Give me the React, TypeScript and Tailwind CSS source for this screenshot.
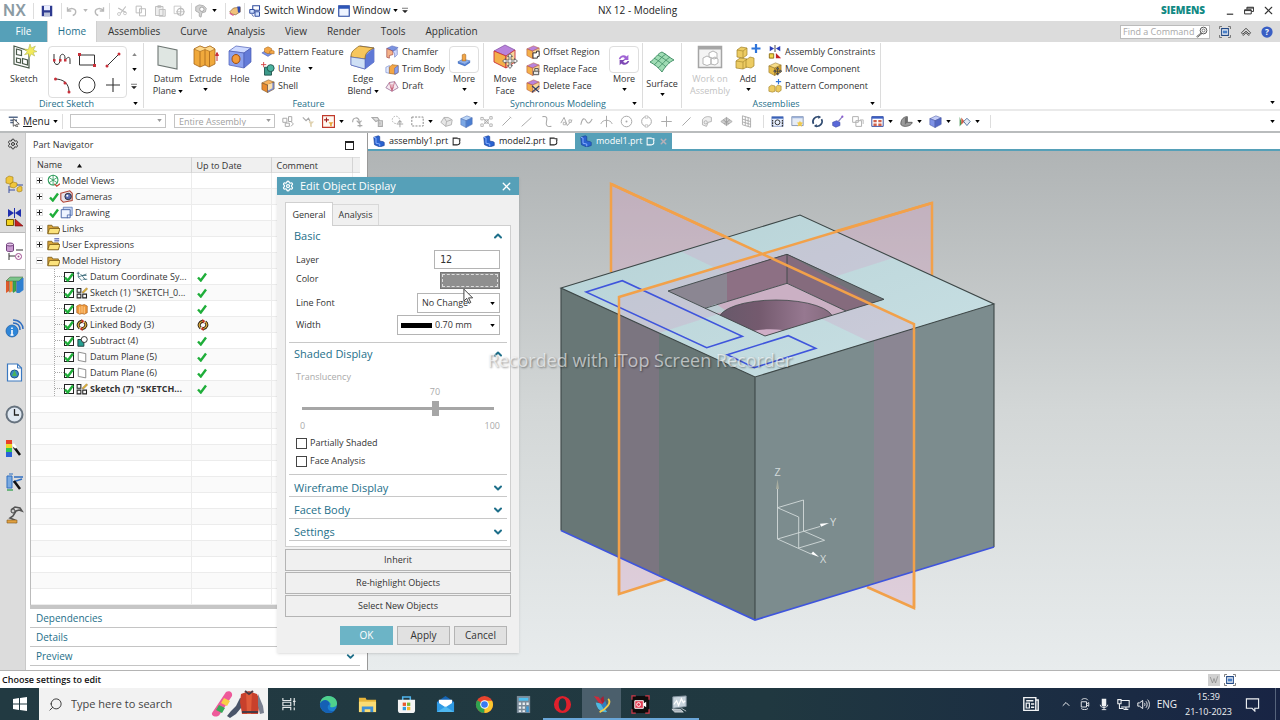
import { useState } from "react";
import type { ReactNode } from "react";
import { Settings, X, ChevronUp, ChevronDown, Search } from "lucide-react";

/* ---------- icon helpers ---------- */

function Ico({ box = 16, className = "w-3.5 h-3.5", children }: { box?: number; className?: string; children: ReactNode }) {
  return (
    <svg viewBox={`0 0 ${box} ${box}`} className={className + " shrink-0"} fill="none" aria-hidden="true">
      {children}
    </svg>
  );
}

function Cube({ top, left, right, stroke = "#555" }: { top: string; left: string; right: string; stroke?: string }) {
  return (
    <g stroke={stroke} strokeWidth=".6" strokeLinejoin="round">
      <path d="M1 4.5 8.5 1 15 3.5 7.5 7z" fill={top} />
      <path d="M1 4.5 7.5 7V15.5L1 12z" fill={left} />
      <path d="M15 3.5 7.5 7V15.5L15 11.5z" fill={right} />
    </g>
  );
}

const Caret = ({ className = "text-black" }: { className?: string }) => (
  <svg viewBox="0 0 6 4" className={"w-[5px] h-[3px] shrink-0 " + className} fill="currentColor" aria-hidden="true">
    <path d="M0 0h6L3 4z" />
  </svg>
);

const Tick = ({ className = "w-2.5 h-2.5" }: { className?: string }) => (
  <Ico box={10} className={className}>
    <path d="M1 5.5 3.8 8.5 9 1.5" stroke="#1fae3a" strokeWidth="2.4" />
  </Ico>
);

/* ---------- ribbon icons ---------- */

const sketchIcon = (
  <Ico box={26} className="w-[26px] h-[26px]">
    <path d="M3 2v18l15 4V7z" fill="#fff" stroke="#4a5a4a" strokeWidth="1.2" />
    <path d="M5.500 5l5 1.500v5l-5-1zM5.500 14l4 1v4l-4-1zM11.500 14.500l5 1.500v5l-5-1.500z" stroke="#4a5a4a" strokeWidth="1.200" />
    <path d="M19 0l1.400 4 4-2-2 4 3.600 1.500-3.800 1 1.500 3.500-3.500-2-1.700 3.500-1-3.800-4 1 2.800-3-3-2.700 4 .5z" fill="#f3ea5a" stroke="#a8b04a" strokeWidth=".5" />
  </Ico>
);

const datumIcon = (
  <Ico box={26} className="w-[26px] h-[26px]">
    <path d="M3 2l19 4v19L3 21z" fill="#dfe6e2" stroke="#6d7673" strokeWidth="1.100" />
  </Ico>
);

const extrudeIcon = (
  <Ico box={26} className="w-[26px] h-[26px]">
    <path d="M1 5l6-3 5 2 5-2 5 3v15l-6 3-4-2-5 2-6-3z" fill="#f0a93c" stroke="#a5651a" strokeWidth=".8" />
    <path d="M1 5l6 2.500 5-2 5 2L22 5l-5-3-5 2-5-2z" fill="#ffd98a" stroke="#a5651a" strokeWidth=".6" />
    <path d="M7 7.500V23M12 5.500V21M16.500 7.500V23" stroke="#a5651a" strokeWidth=".8" />
    <path d="M24 17v-7M22.500 11.500L24 8.500l1.500 3z" stroke="#c8303a" fill="#c8303a" />
  </Ico>
);

const holeIcon = (
  <Ico box={26} className="w-[26px] h-[26px]">
    <path d="M2 7l7-5 15 2-7 5z" fill="#cdd9ff" stroke="#4a5cb4" strokeWidth=".7" />
    <path d="M2 7l15 2v15L2 21z" fill="#8ba1ee" stroke="#4a5cb4" strokeWidth=".7" />
    <path d="M24 4l-7 5v15l7-6z" fill="#637bd8" stroke="#4a5cb4" strokeWidth=".7" />
    <ellipse cx="9" cy="15" rx="4" ry="4.500" fill="#f39b3a" stroke="#9b4e16" />
  </Ico>
);

const edgeBlendIcon = (
  <Ico box={26} className="w-[26px] h-[26px]">
    <path d="M1 12L10 2l14 2v14l-9 7-14-4z" fill="#8ba1ee" stroke="#4a5cb4" strokeWidth=".7" />
    <path d="M24 4l-9 8v13l9-7z" fill="#6079d6" />
    <path d="M1 13c0-6 3-7 8-11l15 2c-6 3-9 5-9 11z" fill="#f7c65c" stroke="#8f6a22" strokeWidth=".8" />
    <path d="M1 13l14 2v10L1 21z" fill="#cfe0f5" stroke="#4a5cb4" strokeWidth=".6" />
  </Ico>
);

const moveFaceIcon = (
  <Ico box={26} className="w-[26px] h-[26px]">
    <path d="M2 7l11-6 10 5-9 6z" fill="#b983dc" stroke="#7c4aa0" strokeWidth=".7" />
    <path d="M2 7l12 5v12L2 18z" fill="#f4b04a" stroke="#c8303a" strokeWidth=".9" />
    <path d="M23 6l-9 6v12l9-6z" fill="#f7d79a" stroke="#c8303a" strokeWidth=".9" />
    <path d="M18 9.500l2.500 3H19v3.500h3.500v-1.500l3 2.500-3 2.500V18H19v3.500h1.500L18 24.500l-2.500-3H17V18h-3.500v1.500l-3-2.500 3-2.500V16H17v-3.500h-1.500z" fill="#eee" stroke="#555" strokeWidth=".8" />
  </Ico>
);

const surfaceIcon = (
  <Ico box={26} className="w-[26px] h-[26px]">
    <path d="M1 13C6 10 9 4 13 3c4 2 8 6 12 8-5 2-9 7-12 12-3-4-8-8-12-10z" fill="#9fdcb4" stroke="#3d8a62" strokeWidth=".9" />
    <path d="M5 9c5 3 9 6 12 9M9 6c5 3 9 6 12 8M5 16c4-3 8-9 12-11M9 19c4-3 7-8 12-11" stroke="#3d8a62" strokeWidth=".8" />
  </Ico>
);

const workOnIcon = (
  <Ico box={26} className="w-[26px] h-[26px]">
    <path d="M1.500 2.500h23v21h-23z" fill="#f4f4f4" stroke="#a5a5a5" strokeWidth="1.500" />
    <path d="M1 2h24v3.500H1z" fill="#a5a5a5" />
    <path d="M6 14l4-2 4 2v6l-4 1.500L6 20zM12 9l4-2 4 2v5l-3 1-3-1.500-2-.5zM14 15l4-2 3 2v4l-3 2-4-1z" fill="#fff" stroke="#b5b5b5" />
  </Ico>
);

const addIcon = (
  <Ico box={26} className="w-[26px] h-[26px]">
    <g stroke="#a08128" strokeWidth=".7" fill="#eccb62">
      <path d="M2 6l4-3 6 1v7l-4 3-6-1z" />
      <path d="M1 17l4-3 7 1v8l-4 2-7-1z" />
      <path d="M11 16l4-3 4 1v8l-3 2-5-1z" />
    </g>
    <path d="M2 6l6 1v7M8 7l4-3M1 17l7 1v7M8 18l4-3" stroke="#a08128" strokeWidth=".6" />
    <path d="M21 0v9M16.500 4.500h9" stroke="#2d74da" strokeWidth="2.200" />
  </Ico>
);

const patternIcon = (
  <Ico>
    <path d="M1 9l5-3 8 3-6 4z" fill="#7b93e0" stroke="#4a5cb4" strokeWidth=".6" />
    <path d="M4 8V4l4-2 4 2v4l-4 2z" fill="#f3a646" stroke="#a5651a" strokeWidth=".6" />
    <path d="M10 10V7l3-1 2 1v3z" fill="#f3a646" stroke="#a5651a" strokeWidth=".6" />
  </Ico>
);

const uniteIcon = (
  <Ico>
    <path d="M4 6h8v9H4z" fill="#3c9a8a" stroke="#1e4f48" />
    <circle cx="11" cy="7" r="4" fill="#4bb3a0" stroke="#1e4f48" />
    <path d="M3 0v6M0 3h6" stroke="#d23b3b" />
  </Ico>
);

const shellIcon = (
  <Ico>
    <Cube top="#f7b25c" left="#e98b2e" right="#7b8fd8" stroke="#704a1c" />
    <path d="M8 6l5-1.500v6L8 13z" fill="#fbe0b0" />
  </Ico>
);

const chamferIcon = (
  <Ico>
    <path d="M2 4l6-3 7 2-6 4z" fill="#7b93e0" stroke="#4a5cb4" strokeWidth=".6" />
    <path d="M2 4l7 3v4l-4 1v3l-3-1z" fill="#f4b28a" stroke="#9b3b3b" strokeWidth=".7" />
    <path d="M9 7l5-2v6l-3 3v-4z" fill="#cfd9ff" stroke="#4a5cb4" strokeWidth=".6" />
  </Ico>
);

const trimIcon = (
  <Ico>
    <path d="M1 6l4-2v9l-4-1z" fill="#dfe8ff" stroke="#7083c8" strokeWidth=".7" />
    <path d="M5 6l3-3 7 1v8l-3 2-7-1z" fill="#f3a646" stroke="#a5651a" strokeWidth=".7" />
    <path d="M11 7l4-3v8l-4 2z" fill="#8ba1ee" stroke="#4a5cb4" strokeWidth=".6" />
  </Ico>
);

const draftIcon = (
  <Ico>
    <path d="M1 10l4-6 6-1 4 7-7 4z" fill="#f5e8f0" stroke="#8a5a88" strokeWidth=".8" />
    <path d="M5 4l3 10M11 3l-3 11M8 6v5M6.500 9.500L8 12l1.500-2.500" stroke="#c0506a" strokeWidth=".8" />
  </Ico>
);

const featureMoreIcon = (
  <Ico>
    <path d="M1 10l6-3 8 2-6 4z" fill="#8fb2ee" stroke="#3a5fa8" strokeWidth=".6" />
    <path d="M1 10l8 3v2l-8-3zM9 13l6-4v2l-6 4z" fill="#4a78cc" />
    <path d="M6 2l3-1 1 1v7H6z" fill="#f3a646" stroke="#a5651a" strokeWidth=".7" />
  </Ico>
);

const syncMoreIcon = (
  <Ico>
    <path d="M2 7c1-4 6-6 9-3l2-2v6H7l2-2c-2-2-4-1-5 1z" fill="#a064d4" />
    <path d="M14 9c-1 4-6 6-9 3l-2 2V8h6l-2 2c2 2 4 1 5-1z" fill="#7d48b4" />
  </Ico>
);

const faceBase = <Cube top="#b983dc" left="#f4b04a" right="#f7d79a" stroke="#b0503a" />;
const offsetIcon = (
  <Ico>
    {faceBase}
    <path d="M8 9h4v-2h3v6h-2v2H8z" fill="#fff" stroke="#222" />
  </Ico>
);
const replaceIcon = (
  <Ico>
    {faceBase}
    <path d="M8.500 10.500h6v4h-6zM10 10V7.500h4V10" fill="#e8e8e8" stroke="#444" />
  </Ico>
);
const deleteIcon = (
  <Ico>
    {faceBase}
    <path d="M7 8l8 7M15 8l-8 7" stroke="#2b3c68" strokeWidth="1.400" />
  </Ico>
);

const constraintsIcon = (
  <Ico>
    <path d="M2 1l5 3-5 3zM14 1L9 4l5 3z" fill="#2b3fb8" />
    <path d="M8 0v8" stroke="#333" />
    <path d="M1.500 10h5v5h-5z" fill="#f2d84a" stroke="#8a6a10" />
    <path d="M9 9l6 6H9z" fill="#c42424" />
  </Ico>
);
const moveCompIcon = (
  <Ico>
    <Cube top="#f5dc8a" left="#e6bd4c" right="#d2a334" stroke="#8f7022" />
    <path d="M11 6v9M6.500 10.500h9M11 6l-1.500 2h3zM11 15l-1.500-2h3zM6.500 10.500l2-1.500v3zM15.500 10.500l-2-1.500v3z" stroke="#333" fill="#fff" strokeWidth=".8" />
  </Ico>
);
const patternCompIcon = (
  <Ico>
    <path d="M1 9l3-2 4 1v6l-3 1-4-1zM9 9l2-2 4 1v5l-3 2-3-1z" fill="#eccb62" stroke="#a08128" strokeWidth=".7" />
    <path d="M12 0v6M9 3h6" stroke="#2d74da" strokeWidth="1.300" />
  </Ico>
);

/* ---------- ribbon building blocks ---------- */

function BigButton({ icon, lines, caret, width, disabled, low }: { icon: ReactNode; lines: string[]; caret?: boolean; width: string; disabled?: boolean; low?: boolean }) {
  const last = lines.length - 1;
  return (
    <button disabled={disabled} className={`flex flex-col items-center ${width} ${low ? "pt-[6px]" : "pt-px"} ${disabled ? "text-[#c2c2c2]" : "text-[#333]"}`}>
      {icon}
      <span className="mt-[3px] block text-[9px] leading-[12px]">
        {lines.map((l, i) => (
          <span key={l} className="flex items-center justify-center gap-[2px] whitespace-nowrap">
            {l}
            {caret && i === last && last > 0 && <Caret />}
          </span>
        ))}
      </span>
      {caret && last === 0 && <span className="mt-[3px]"><Caret /></span>}
    </button>
  );
}

function SmallList({ items, width }: { items: [ReactNode, string, boolean?][]; width: string }) {
  return (
    <div className={`flex flex-col ${width}`}>
      {items.map(([icon, text, caret]) => (
        <button key={text} className="flex h-[17px] items-center gap-[3px] whitespace-nowrap text-[9px] text-[#333]">
          {icon}
          {text}
          {caret && <span className="ml-1"><Caret /></span>}
        </button>
      ))}
    </div>
  );
}

function MoreButton({ icon }: { icon: ReactNode }) {
  return (
    <button className="flex w-[30px] flex-col items-center pt-[3px] text-[9px] text-[#333]">
      <span className="flex h-[27px] w-full items-center justify-center rounded-sm border border-[#dedede]">{icon}</span>
      <span className="leading-[12px]">More</span>
      <span className="mt-[3px]"><Caret /></span>
    </button>
  );
}

function Group({ label, width, corner = true, children }: { label: string; width: string; corner?: boolean; children: ReactNode }) {
  return (
    <section className={`mt-px flex h-[65px] flex-col border-r border-[#dcdcdc] ${width}`}>
      <div className="flex min-h-0 flex-1">{children}</div>
      <div className="flex h-[10px] items-center pr-[5px]">
        <h2 className="flex-1 text-center text-[9px] leading-none text-[#1e6f8a]">{label}</h2>
        {corner && <Caret />}
      </div>
    </section>
  );
}

/* ---------- title bar + tabs ---------- */

function TitleBar() {
  return (
    <header className="flex h-[21px] items-center bg-white text-[10px] text-[#222]">
      <div className="flex flex-1 items-center">
        <span className="w-[33px] pl-[3px] font-['Roboto'] text-[17px] font-medium leading-none text-[#8b9ba4]">NX</span>
        <div className="flex items-center border-l border-[#ddd] pl-[7px]">
          <Ico className="w-3 h-3">
            <path d="M1 1h14v14H1z" fill="#2d3a90" />
            <path d="M4 1h8v6H4z" fill="#e8ecff" />
            <path d="M4 10h8v5H4z" fill="#b8c0d8" />
          </Ico>
          <div className="ml-2 flex h-4 items-center gap-[5px] border-x border-[#ddd] px-[4px] text-[#b8b8b8]">
            <Ico className="w-3 h-3"><path d="M2 3v5h5M2 8c3-5 11-4 11 1 0 2-1 4-4 5" stroke="currentColor" strokeWidth="1.800" /></Ico>
            <Caret className="text-[#b8b8b8]" />
            <Ico className="w-3 h-3"><path d="M14 3v5H9M14 8C11 3 3 4 3 9c0 2 1 4 4 5" stroke="currentColor" strokeWidth="1.800" /></Ico>
          </div>
          <div className="flex h-4 items-center gap-[7px] border-r border-[#ddd] px-[6px] text-[#bcbcbc]">
            <Ico className="w-3 h-3"><path d="M13 2L6 11M3 4l10 6" stroke="currentColor" strokeWidth="1.500" /><circle cx="4" cy="12" r="2" stroke="currentColor" /><circle cx="12" cy="11" r="2" stroke="currentColor" /></Ico>
            <Ico className="w-3 h-3"><path d="M1.500 1.500h7v9h-7zM6 5h8v9.500H6z" fill="#fff" stroke="currentColor" strokeWidth="1.300" /></Ico>
            <Ico className="w-3 h-3"><path d="M2 2h10v12H2zM5 1h4v2H5zM7 6h8v9H7z" fill="#eee" stroke="currentColor" strokeWidth="1.200" /></Ico>
            <Ico className="w-3 h-3"><path d="M1.500 1.500h9v10h-9z" stroke="currentColor" /><circle cx="10" cy="9" r="4.500" stroke="currentColor" strokeWidth="1.500" /><path d="M10 3v12M4 9h12" stroke="currentColor" /></Ico>
          </div>
          <div className="flex items-center gap-1 px-[2px]">
            <Ico className="w-3.5 h-3.5"><path d="M2 3l4-2 5 1 3 3-1 4-4 1-1 5-2-1v-4L2 8z" fill="#d4d4d4" stroke="#aaa" /><circle cx="9" cy="6" r="2.500" fill="#fff" stroke="#999" /></Ico>
            <Caret />
          </div>
          <div className="ml-[6px] flex h-4 items-center border-x border-[#ddd] px-[3px]">
            <Ico className="w-3 h-3"><path d="M1 9l5-5 9-1v6l-6 4-6-1z" fill="#f1c27c" stroke="#7a5020" strokeWidth=".8" /><path d="M11 2h4v8h-3z" fill="#2f4bb4" /><path d="M1 11l5 3" stroke="#e05090" strokeWidth="1.500" /></Ico>
          </div>
        </div>
        <button className="ml-[4px] flex items-center gap-[3px] whitespace-nowrap">
          <Ico className="w-3 h-3"><path d="M5 1h9v6H5z" fill="#fff" stroke="#2d4a9c" strokeWidth="1.400" /><path d="M1 6h6v5H1zM8 9h6v6H8z" fill="#cfe0ff" stroke="#2d4a9c" strokeWidth="1.300" /><path d="M4 12c0 2 1 3 3 3" stroke="#2d4a9c" /></Ico>
          Switch Window
        </button>
        <button className="ml-[3px] flex items-center gap-[3px]">
          <Ico className="w-3 h-3"><path d="M1 1h14v14H1z" fill="#eef4ff" stroke="#2445a0" strokeWidth="1.500" /><path d="M1 1h14v4H1z" fill="#2c55b8" /></Ico>
          Window
          <Caret />
        </button>
        <Ico box={8} className="ml-[4px] w-[6px] h-[7px]"><path d="M0 1h8M1 4h6L4 7z" fill="#222" stroke="#222" strokeWidth=".8" /></Ico>
      </div>
      <h1 className="text-[10px]">NX 12 - Modeling</h1>
      <div className="flex flex-1 items-center justify-end pr-[5px]">
        <span className="mr-[21px] text-[10px] font-extrabold text-[#128a84]">SIEMENS</span>
        <button aria-label="Minimize" className="mr-[10px]"><Ico box={10} className="w-2 h-2.5"><path d="M1 9h8" stroke="#333" strokeWidth="1.500" /></Ico></button>
        <button aria-label="Restore" className="mr-[8px]"><Ico box={12} className="w-2.5 h-2.5"><path d="M3.500 4V1.500h8v5H9M.7 4.500h8v5h-8zM.7 5.500h8M3.500 2.500h8" stroke="#333" strokeWidth="1.200" /></Ico></button>
        <button aria-label="Close"><X size={13} strokeWidth={2} className="text-[#333]" /></button>
      </div>
    </header>
  );
}

const ribbonTabs = ["Assemblies", "Curve", "Analysis", "View", "Render", "Tools", "Application"];

function RibbonTabs() {
  return (
    <nav className="flex h-[21px] items-stretch bg-[#dcdcdc] text-[10px] text-[#333]">
      <button className="w-[47px] bg-[#56a0b8] text-white">File</button>
      <button className="w-[50px] border-x border-[#d0d0d0] bg-white text-[#1e6f8a]">Home</button>
      <div className="flex gap-[20px] pl-[11px]">
        {ribbonTabs.map((t) => <button key={t}>{t}</button>)}
      </div>
      <div className="ml-auto flex items-center gap-[9px] pr-[7px]">
        <label className="flex h-[14px] w-[90px] items-center border border-[#bbb] bg-white pl-[2px] pr-px">
          <input aria-label="Find a Command" placeholder="Find a Command" className="min-w-0 flex-1 text-[9px] leading-none outline-none placeholder:text-[#a8a8a8]" />
          <Ico className="w-3 h-3"><circle cx="10" cy="6" r="4.500" stroke="#555" strokeWidth="1.300" /><circle cx="10" cy="6" r="2" stroke="#555" /><path d="M7 9l-6 5 1 1 6-5" stroke="#555" strokeWidth="1.200" /></Ico>
        </label>
        <Ico className="w-3 h-3"><path d="M4 .7H.7V4M12 .7h3.300V4M4 15.300H.7V12M12 15.300h3.300V12" stroke="#555" /><path d="M3.500 3.500h9v9h-9z" fill="#fff" stroke="#234a86" strokeWidth="1.400" /><path d="M5 6h6v4H5z" fill="#4a80c8" /></Ico>
        <Ico className="w-3 h-3"><path d="M2 9l6-6 6 6-1.500 2L8 7l-4.500 4zM4 13l4-4 4 4" stroke="#333" strokeWidth="1.200" /></Ico>
        <Ico className="w-3 h-3"><circle cx="8" cy="8" r="7.500" fill="#3a5fc4" /><text x="8" y="12" fontSize="11" fontWeight="700" textAnchor="middle" fill="#fff" fontFamily="Open Sans, sans-serif">?</text></Ico>
      </div>
    </nav>
  );
}

function Ribbon() {
  return (
    <div className="flex h-[67px] bg-white">
      <Group label="Direct Sketch" width="w-[144px]">
        <BigButton icon={sketchIcon} lines={["Sketch"]} width="w-[48px]" />
        <div className="mt-[3px] grid h-[52px] w-[79px] grid-cols-3 place-items-center rounded-sm border border-[#dedede]">
          <Ico box={18} className="w-[18px] h-[18px]"><path d="M1 3v6c0 6 6 6 6 0V7c0-5 5-5 5 0v2c0 0 5-6 5 0v4" stroke="#333" /><path d="M0 8h2.500v2.500H0zM6 8h2.500v2.500H6zM11 8h2.500v2.500H11z" fill="#c8303a" /></Ico>
          <Ico box={18} className="w-[18px] h-[18px]"><path d="M1.500 4h15v10h-15z" stroke="#333" /><path d="M0 2h3v3H0zM15 13h3v3h-3z" fill="#c8303a" /></Ico>
          <Ico box={18} className="w-[18px] h-[18px]"><path d="M3 15L15 3" stroke="#333" /><circle cx="3" cy="15" r="1.500" fill="#c8303a" /><circle cx="15" cy="3" r="1.500" fill="#c8303a" /></Ico>
          <Ico box={18} className="w-[18px] h-[18px]"><path d="M2 3c8 0 14 4 14 13" stroke="#333" /><circle cx="2.500" cy="3" r="1.500" fill="#c8303a" /><circle cx="12" cy="7" r="1.500" fill="#c8303a" /><circle cx="16" cy="16" r="1.500" fill="#c8303a" /></Ico>
          <Ico box={18} className="w-[18px] h-[18px]"><circle cx="9" cy="9" r="8" stroke="#333" /></Ico>
          <Ico box={18} className="w-[18px] h-[18px]"><path d="M9 2v14M2 9h14" stroke="#333" strokeWidth="1.100" /></Ico>
        </div>
        <div className="flex w-[14px] flex-col items-center justify-between pb-[8px] pt-[10px]">
          <span className="rotate-180"><Caret className="text-[#888]" /></span>
          <Caret />
          <Ico box={8} className="w-[6px] h-[7px]"><path d="M0 1h8M1 4h6L4 7z" fill="#222" stroke="#222" strokeWidth=".8" /></Ico>
        </div>
      </Group>

      <Group label="Feature" width="w-[340px]">
        <div className="flex pl-1">
          <BigButton icon={datumIcon} lines={["Datum", "Plane"]} caret width="w-[40px]" />
          <BigButton icon={extrudeIcon} lines={["Extrude"]} caret width="w-[35px]" />
          <BigButton icon={holeIcon} lines={["Hole"]} width="w-[34px]" />
          <SmallList width="w-[88px] pl-1" items={[[patternIcon, "Pattern Feature"], [uniteIcon, "Unite", true], [shellIcon, "Shell"]]} />
          <BigButton icon={edgeBlendIcon} lines={["Edge", "Blend"]} caret width="w-[36px]" />
          <SmallList width="w-[68px] pl-1" items={[[chamferIcon, "Chamfer"], [trimIcon, "Trim Body"], [draftIcon, "Draft"]]} />
          <MoreButton icon={featureMoreIcon} />
        </div>
      </Group>

      <Group label="Synchronous Modeling" width="w-[159px]">
        <BigButton icon={moveFaceIcon} lines={["Move", "Face"]} width="w-[42px]" />
        <SmallList width="w-[83px]" items={[[offsetIcon, "Offset Region"], [replaceIcon, "Replace Face"], [deleteIcon, "Delete Face"]]} />
        <MoreButton icon={syncMoreIcon} />
      </Group>

      <Group label="" corner={false} width="w-[39px]">
        <BigButton icon={surfaceIcon} lines={["Surface"]} caret width="w-[38px]" low />
      </Group>

      <Group label="Assemblies" width="w-[199px]">
        <BigButton icon={workOnIcon} lines={["Work on", "Assembly"]} width="w-[56px]" disabled />
        <BigButton icon={addIcon} lines={["Add"]} caret width="w-[20px]" />
        <SmallList width="w-[118px] pl-[10px]" items={[[constraintsIcon, "Assembly Constraints"], [moveCompIcon, "Move Component"], [patternCompIcon, "Pattern Component"]]} />
      </Group>

      <div className="ml-auto flex items-end pb-[5px] pr-[5px]"><Caret /></div>
    </div>
  );
}

/* ---------- selection toolbar ---------- */

const g = "#a9a9a9";
// one drawing per tool; "caret" puts a drop-down arrow after the tool
const selectionTools: { d: ReactNode; caret?: boolean }[] = [
  { d: <><path d="M1 4h5v5H1zM8 2h4v6H8zM4 10h5v4H4zM11 8l3 3-3 3" stroke={g} strokeWidth="1.200" /></> },
  { d: <><path d="M1 3l4 4 3-3 2 4" stroke={g} strokeWidth="1.400" /><path d="M8 8h7l-3 3v4l-2-1v-3z" fill="#e0d2b0" /></> },
  { caret: true, d: <><path d="M.7.7h14.600v14.600H.7z" fill="#fff8f0" stroke="#c0392b" strokeWidth="1.400" /><path d="M5.500 3v6M2.500 6h6" stroke="#a12020" strokeWidth="1.300" /><path d="M8 9h6l-2 2.500V14l-2-.5v-2z" fill="#e8a33a" /></> },
  { d: <><path d="M2 9c0-7 8-7 8-1v2M7 7l3 3 3-3M8 13h6M11 10v5" stroke={g} strokeWidth="1.400" /></> },
  { d: <><path d="M1 3h7l2 3-4 2zM9 7h5v7H9zM11 9v3" stroke={g} strokeWidth="1.300" fill="#ddd" /></> },
  { d: <><circle cx="6" cy="6" r="4.500" stroke={g} strokeDasharray="2 1.500" /><path d="M11 7v8M7 11h8M11 7l-2 2M11 7l2 2" stroke={g} strokeWidth="1.300" /></> },
  { caret: true, d: <><path d="M1 2.500h14v11H1z" stroke="#888" strokeDasharray="2.500 1.500" strokeWidth="1.200" /></> },
  { d: <><path d="M1 9l4-6h5l5 3-1 6-7 2z" fill="#e6e6e6" stroke={g} /><path d="M5 3l3 5-1 6M8 8l6-2" stroke={g} /></> },
  { d: <Cube top="#bcd6f7" left="#7ba7e4" right="#4c7ed0" stroke="#4a6cb0" /> },
  { d: <><path d="M5 5l6 6M11 5l-6 6" stroke={g} /><path d="M1 3h3v3H1zM12 2h3v3h-3zM1 11h3v3H1zM12 11h3v3h-3zM6 6h4v4H6z" stroke={g} /></> },
  { d: <path d="M3 13L13 3M12 2l2 2" stroke={g} strokeWidth="1.200" /> },
  { d: <path d="M2 14L14 3" stroke={g} strokeWidth="1.200" /> },
  { d: <path d="M3 2c6-1 6 2 5 6s0 7 6 6" stroke={g} strokeWidth="1.300" /> },
  { d: <><path d="M1 10l4-7 4 10 6-7" stroke={g} strokeWidth="1.200" /><path d="M4 9h3v3H4zM11 6h3v3h-3z" fill="#fff" stroke={g} /></> },
  { d: <path d="M1 12c2-10 5-8 7-4s5 1 7-3" stroke={g} strokeWidth="1.300" /> },
  { d: <path d="M8 1v14M1 11c2-6 12-6 14 0" stroke={g} strokeWidth="1.200" /> },
  { d: <><circle cx="8" cy="8" r="6.500" stroke={g} strokeWidth="1.200" /><circle cx="8" cy="8" r="1.200" fill={g} /></> },
  { d: <><circle cx="8" cy="8" r="6" stroke={g} strokeWidth="1.200" /><path d="M6.500 1h3v3h-3zM6.500 12h3v3h-3z" fill="#fff" stroke={g} strokeWidth=".7" /></> },
  { d: <path d="M8 1.500v13M1.500 8h13" stroke={g} strokeWidth="1.200" /> },
  { d: <path d="M3 13L13 3" stroke={g} strokeWidth="1.200" /> },
  { d: <><path d="M3 6c2-4 7-5 11-3v5l-4 1-2 5-5-2z" fill="#eee" stroke={g} /><circle cx="7" cy="9" r="2" stroke={g} /></> },
  { d: <><path d="M1 8l7-5 7 5-7 5z" fill="#ccc" stroke={g} /><path d="M4 6l7 5M8 3v10M12 6l-7 5" stroke="#999" /></> },
  { d: <path d="M3 1l10 3v11L3 12zM6.500 2v11M10 3v11M3 5l10 3M3 8.500l10 3" stroke={g} strokeWidth="1.100" /> },
];

const viewTools: { d: ReactNode; caret?: boolean }[] = [
  { d: <><path d="M1 2h14v12H1z" fill="#e8f0ff" stroke="#8a9cc8" /><path d="M1 2h14v2.500H1z" fill="#3a62b8" /><circle cx="8" cy="9" r="3" stroke="#333" strokeWidth="1.200" /><path d="M2 6v8M14 6v8" stroke="#333" strokeWidth="1.500" strokeDasharray="2 1" /></> },
  { d: <><path d="M1 2h14v11H1z" fill="#e6ecf6" stroke="#7888a8" /><path d="M1 2h14v2H1z" fill="#9ab0d8" /><path d="M11 7l1 2 3 .500-2 2 .500 3-2.500-1.500L8 14l1-3-2-1.500 3-.500z" fill="#f0c94a" /></> },
  { d: <><path d="M3 11a6 6 0 0 1 7-8.500M13 5a6 6 0 0 1-7 8.500" stroke="#2f4a70" strokeWidth="2" /><path d="M9 .5l3.500 2L9 5zM7 15.500l-3.500-2L7 11z" fill="#2f4a70" /></> },
  { d: <><path d="M2 9l5-2 4 2v4l-5 2-4-2z" fill="#5a68d8" stroke="#3a46a0" strokeWidth=".7" /><path d="M9 8l5-6" stroke="#8a80c0" strokeWidth="1.500" /><circle cx="14" cy="2" r="1.300" fill="#8a5ad0" /></> },
  { d: <><path d="M2 2h7v7H2zM6 7h7v7H6z" fill="#fff" stroke="#b0b0b0" strokeWidth="1.200" /><path d="M11 6h4v5" stroke="#b0b0b0" /></> },
  { caret: true, d: <><path d="M1 2h14v12H1z" fill="#fff" stroke="#3a4fa0" strokeWidth="1.200" /><path d="M1 2h14v2.500H1z" fill="#3a5fc4" /><path d="M3 6h4v3H3zM9 6h4v3H9zM3 10.500h4v3H3zM9 10.500h4v3H9z" fill="#d0604a" /></> },
  { caret: true, d: <><path d="M1 11c0-6 4-9 8-9v7h6c0 3-5 5-8 5s-6-1-6-3z" fill="#9a9a9a" stroke="#555" /><path d="M9 2L6 4v8l3-3" fill="#6d6d6d" /></> },
  { caret: true, d: <Cube top="#c4cdf7" left="#7f92e6" right="#5468c4" stroke="#3f4f9c" /> },
  { caret: true, d: <><path d="M2 2v12l3-4z" fill="#4a9a5a" /><path d="M4 3l4 5-4 4z" fill="#d0604a" /><path d="M7 8l4-4 4 4-4 5z" fill="#e4ecf8" stroke="#3a5f90" /></> },
];

function ToolRow({ tools }: { tools: { d: ReactNode; caret?: boolean }[] }) {
  return (
    <div className="flex items-center">
      {tools.map((t, i) => (
        <button key={i} aria-label={`Tool ${i + 1}`} className="flex items-center">
          <span className="flex w-5 justify-center"><Ico className="w-[13px] h-[13px]">{t.d}</Ico></span>
          {t.caret && <span className="flex w-[9px] justify-start"><Caret /></span>}
        </button>
      ))}
    </div>
  );
}

function DropBox({ width, value, label }: { width: string; value: string; label: string }) {
  return (
    <div className={`relative h-[14px] ${width}`}>
      <select disabled aria-label={label} className="h-full w-full appearance-none border border-[#c4c4c4] bg-white pl-1 text-[9px] leading-none text-[#a0a0a0] opacity-100">
        <option>{value}</option>
      </select>
      <span className="pointer-events-none absolute right-1 top-[5px] flex"><Caret className="text-[#999]" /></span>
    </div>
  );
}

function SelectionBar() {
  return (
    <div className="flex h-[24px] items-center border-y-2 border-t-[#eaeaea] border-b-[#b9bcbd] bg-white text-[9px] text-[#222]">
      <button className="ml-2 mr-[5px] flex items-center gap-[3px] border-r border-[#ddd] pr-1 text-[10px]">
        <Ico className="w-3 h-3"><path d="M1 2h12v2H1zM3 6h9v2H3zM3 9h7v2H3z" fill="#566a8a" /><path d="M7 5l8 7-4 .500 2 3-2 .500-1.500-3L7 15z" fill="#fff" stroke="#333" /></Ico>
        <span><u>M</u>enu</span>
        <Caret />
      </button>
      <div className="flex gap-2 pl-[2px]">
        <DropBox width="w-[96px]" value="" label="Type filter" />
        <DropBox width="w-[101px]" value="Entire Assembly" label="Selection scope" />
      </div>
      <div className="pl-1"><ToolRow tools={selectionTools} /></div>
      <div className="ml-[6px] border-x border-[#ddd] pl-1 pr-[6px]"><ToolRow tools={viewTools} /></div>
      <div className="ml-auto pr-[5px]"><Caret /></div>
    </div>
  );
}

/* ---------- resource bar ---------- */

const resourceIcons: { d: ReactNode; active?: boolean; cls: string }[] = [
  { cls: "h-[36px]", d: <><path d="M1 3l3-2 4 1v5L5 9 1 8zM5 9l3-2 4 1v3l-3 2-4-1zM12 13l3-2 2 1v4l-3 1-2-1z" fill="#f0c63c" stroke="#a07a14" strokeWidth=".6" /><path d="M4 11v7M4 15h6M12 10h6" stroke="#3a4fa0" /></> },
  { cls: "h-[30px]", d: <><path d="M3 1l6 4-6 4zM16 1l-6 4 6 4z" fill="#1f2fae" /><path d="M9.500 0v10" stroke="#1f2fae" /><path d="M1.500 11.500h7v6h-7z" fill="#f2d21e" stroke="#6d5a08" /><path d="M10 11l8 7h-8z" fill="#c42020" stroke="#701010" strokeWidth=".6" /></> },
  { cls: "h-[38px]", active: true, d: <><path d="M1.500 2.500v6c0 1.500 7 1.500 7 0v-6" fill="#c89ad0" stroke="#70407c" /><ellipse cx="5" cy="2.500" rx="3.500" ry="1.500" fill="#e6c8ea" stroke="#70407c" /><path d="M4 11v7M4 14h6M11 8h7" stroke="#333" /><circle cx="13.500" cy="14.500" r="3" stroke="#a04a90" /><circle cx="13.500" cy="14.500" r="1" fill="#a04a90" /></> },
  { cls: "h-[30px]", d: <><path d="M1 5l3-3v13l-3 2z" fill="#e05a2a" /><path d="M4.500 5l3-3v13l-3 2z" fill="#f4922a" /><path d="M8 5l3-3v13l-3 2z" fill="#35a84a" /><path d="M11.500 5l5-3h2v12l-4 3h-3z" fill="#2f7fd0" /><path d="M1 5L5 1h13l-4 4z" fill="#7cc48a" stroke="#3a6a40" strokeWidth=".5" /><path d="M4.300 5v11M7.800 5v11M11.300 5v11" stroke="#444" strokeWidth=".5" /></> },
  { cls: "h-[56px]", d: <><circle cx="7" cy="12" r="6" fill="#2f86d8" stroke="#1a5aa0" strokeWidth=".7" /><path d="M7 8.500v1.500M7 11v5M5.500 16h3" stroke="#fff" strokeWidth="1.600" /><path d="M8 4c5 0 7 3 7 7M8 1c7 0 10 5 10 9" stroke="#2f6ec0" strokeWidth="1.500" /></> },
  { cls: "h-[32px]", d: <><path d="M2.500 1h10l4 4v13h-14z" fill="#fff" stroke="#3a78c0" strokeWidth="1.200" /><path d="M12.500 1v4h4" stroke="#3a78c0" /><circle cx="9.500" cy="11" r="4" fill="#3a8ac8" stroke="#205a88" /><path d="M7 13l2.500-6 2.500 6z" fill="#4cb45a" /></> },
  { cls: "h-[52px]", d: <><circle cx="9.500" cy="9.500" r="8" fill="#dfe8f2" stroke="#66727e" strokeWidth="2" /><path d="M9.500 4v6H14" stroke="#222" strokeWidth="1.300" /></> },
  { cls: "h-[16px]", d: <><path d="M1 1h6v4H1z" fill="#e8402a" /><path d="M1 5h6v4H1z" fill="#f0d82a" /><path d="M1 9h6v4H1z" fill="#32c850" /><path d="M1 13h6v5H1z" fill="#2a60d8" /><path d="M9 8l6 8" stroke="#111" strokeWidth="2.500" /><path d="M8 5l3 4" stroke="#fff" strokeWidth="2.500" /></> },
  { cls: "h-[52px]", d: <><path d="M2 3h5v12H2zM4 1h4" stroke="#2f6ec0" fill="#7aaae0" /><path d="M9 4h9M8 9l9-3" stroke="#2f6ec0" strokeWidth="1.500" /><path d="M9 8l6 8" stroke="#111" strokeWidth="2.500" /><path d="M2 17h6" stroke="#48a860" strokeWidth="1.500" /></> },
  { cls: "h-[14px]", d: <><path d="M6 4l4-3 5 1 2 3-3-1-3 1-3 5-3 2 5 2 1 3" stroke="#555" strokeWidth="1.600" /><path d="M2 14h10v3H2z" fill="#e0a040" stroke="#805820" strokeWidth=".6" /><circle cx="8" cy="5" r="2" fill="#ccc" stroke="#444" /></> },
];

function ResourceBar() {
  return (
    <aside className="flex w-[26px] flex-col items-center border-r border-[#c9c9c9] bg-[#dcdcdc]">
      <button aria-label="Options" className="mt-1 mb-[15px] flex h-[14px] items-center"><Settings size={12} className="text-[#333]" strokeWidth={2} /></button>
      {resourceIcons.map((r, i) => (
        <button
          key={i}
          aria-label={`Resource ${i + 1}`}
          className={`flex items-center justify-center ${r.cls} ${r.active ? "w-full border-y border-[#bbb] bg-white" : ""}`}
        >
          <Ico box={19} className="ml-[3px] w-[19px] h-[19px]">{r.d}</Ico>
        </button>
      ))}
    </aside>
  );
}

/* ---------- part navigator ---------- */

type NodeRow = { label: string; icon: ReactNode; kind: "root" | "checked" | "child"; open?: boolean; bold?: boolean; status?: "ok" | "linked" };

const folder = <><path d="M1 4h5l1 2h7v8H1z" fill="#d9a43a" stroke="#7a5a14" /><path d="M3 8h13l-2 6.500H1z" fill="#fbe27c" stroke="#7a5a14" /></>;
const sketchSmall = <><path d="M1.500 2h5v5h-5zM1.500 9.500h5v5h-5zM9 9.500h5v5H9z" stroke="#222" strokeWidth="1.400" /><path d="M8 7l6-6 1.500 1.500L10 8z" fill="#e8b83a" stroke="#7a5a14" strokeWidth=".6" /></>;
const planeSmall = <path d="M3 1.500l10 2v11l-10-2z" fill="#fff" stroke="#777" strokeWidth="1.100" />;
const linked = (
  <>
    <path d="M5 12C1 9 3 4 8 3M11 4c4 3 2 8-3 9" stroke="#2a1c10" strokeWidth="4" />
    <path d="M5 12C1 9 3 4 8 3M11 4c4 3 2 8-3 9" stroke="#e0b040" strokeWidth="1.600" />
    <path d="M7 0l4 2.500L8 6zM9 16l-4-2.500L8 10z" fill="#c03020" />
  </>
);

const treeRows: NodeRow[] = [
  { label: "Model Views", kind: "root", icon: <><circle cx="7.500" cy="7.500" r="6" stroke="#2a9a58" strokeWidth="1.300" /><path d="M7.500 1v13M2 4l11 7M13 4L2 11" stroke="#2a9a58" /><path d="M9 12l3 3 4-3" stroke="#c04030" strokeWidth="1.300" /></> },
  { label: "Cameras", kind: "checked", icon: <><path d="M1 4l11-3 3 3v9l-11 2-3-3z" fill="#e8e0e8" stroke="#b04030" strokeWidth="1.300" /><circle cx="10" cy="8" r="4" fill="#5a6ab0" stroke="#222" /><circle cx="9" cy="7" r="1.300" fill="#fff" /></> },
  { label: "Drawing", kind: "checked", icon: <><path d="M4 1.500h11v10H4z" fill="#c8d8f4" stroke="#5a78b8" /><path d="M1.500 4.500h11v10h-11z" fill="#eef4ff" stroke="#4a68a8" strokeWidth="1.200" /><path d="M9 15v-4h4" stroke="#4a68a8" /></> },
  { label: "Links", kind: "root", icon: folder },
  { label: "User Expressions", kind: "root", icon: <>{folder}<path d="M9 1h6M9 3.500h6" stroke="#2f3fa0" strokeWidth="1.200" /></> },
  { label: "Model History", kind: "root", open: true, icon: folder },
  { label: "Datum Coordinate Sy...", kind: "child", status: "ok", icon: <><path d="M3 1v7l5 5M3 8l11-4M6 4l7 8M8 6h6M9 11h6M1 3h4" stroke="#3a6a78" strokeWidth="1.100" /></> },
  { label: 'Sketch (1) "SKETCH_0...', kind: "child", status: "ok", icon: sketchSmall },
  { label: "Extrude (2)", kind: "child", status: "ok", icon: <><path d="M1 4l4-2 3 1 3-1 4 2v9l-4 2-3-1-3 1-4-2z" fill="#f0983a" stroke="#9a5414" strokeWidth=".8" /><path d="M5 5v9M8 4v9M11 5v9" stroke="#fbd49a" strokeWidth="1.200" /></> },
  { label: "Linked Body (3)", kind: "child", status: "linked", icon: linked },
  { label: "Subtract (4)", kind: "child", status: "ok", icon: <><path d="M2.500 6h8v9h-8z" fill="#26a092" stroke="#1c3a38" strokeWidth="1.200" /><circle cx="11" cy="6" r="4" fill="#fff" stroke="#222" strokeWidth="1.200" /><path d="M0 2h5" stroke="#222" strokeWidth="1.200" /></> },
  { label: "Datum Plane (5)", kind: "child", status: "ok", icon: planeSmall },
  { label: "Datum Plane (6)", kind: "child", status: "ok", icon: planeSmall },
  { label: 'Sketch (7) "SKETCH...', kind: "child", status: "ok", bold: true, icon: sketchSmall },
];
const emptyRows = Array.from({ length: 13 }, (_, i) => i);

function TreeCell({ row }: { row: NodeRow }) {
  const [on, setOn] = useState(true);
  if (row.kind === "child") {
    return (
      <label className="ml-[23px] flex h-[15px] items-center border-l border-dotted border-[#aaa]">
        <span className="w-[9px] border-t border-dotted border-[#aaa]" />
        <span className="relative flex h-[10px] w-[10px]">
          <input type="checkbox" checked={on} onChange={() => setOn(!on)} className="h-[10px] w-[10px] appearance-none border border-[#222] bg-white" />
          {on && <span className="pointer-events-none absolute inset-0 flex"><Tick /></span>}
        </span>
        <Ico className="ml-[2px] mr-[2px] w-3 h-3">{row.icon}</Ico>
        <span className={row.bold ? "font-bold" : ""}>{row.label}</span>
      </label>
    );
  }
  return (
    <div className="flex h-[15px] items-center pl-[5px]">
      <button aria-label={row.open ? "Collapse" : "Expand"} className="mr-[4px] flex h-[7px] w-[7px] items-center justify-center border border-[#ddd] bg-white">
        <Ico box={5} className="w-[5px] h-[5px]"><path d={row.open ? "M0 2.500h5" : "M0 2.500h5M2.500 0v5"} stroke="#222" /></Ico>
      </button>
      {row.kind === "checked" && <span className="ml-[2px] mr-px"><Tick /></span>}
      <Ico className="mr-[2px] w-[13px] h-[13px]">{row.icon}</Ico>
      {row.label}
    </div>
  );
}

function PartNavigator() {
  return (
    <section className="flex w-[342px] flex-col border-r border-[#999] bg-white text-[9px] text-[#333]">
      <div className="flex h-[24px] items-center justify-between pl-[7px] pr-[13px]">
        <h2>Part Navigator</h2>
        <button aria-label="Undock" className="h-[9px] w-[9px] border border-t-2 border-[#222]" />
      </div>
      <div className="ml-[4px] mr-[7px] flex-1 overflow-hidden border-l border-[#bbb]">
        <table className="w-full table-fixed border-collapse">
          <colgroup>
            <col className="w-[160px]" />
            <col className="w-[80px]" />
            <col className="w-[81px]" />
            <col />
          </colgroup>
          <thead>
            <tr className="h-[15px] border-y border-[#dedede] bg-[#f0f0f0] text-left">
              <th className="border-r border-[#d4d4d4] p-0 pl-[6px] font-normal">
                <span className="flex h-[13px] items-center gap-[14px]">Name <Ico box={8} className="w-[7px] h-[5px]"><path d="M0 7h8L4 1z" fill="#111" /></Ico></span>
              </th>
              <th className="border-r border-[#d4d4d4] p-0 pl-[5px] font-normal leading-[13px]">Up to Date</th>
              <th className="border-r border-[#d4d4d4] p-0 pl-[5px] font-normal leading-[13px]">Comment</th>
              <th className="p-0" />
            </tr>
          </thead>
          <tbody>
            {treeRows.map((row) => (
              <tr key={row.label} className="h-4 even:bg-[#fafafa]">
                <td className="overflow-hidden whitespace-nowrap border-b border-r border-[#ececec] p-0"><TreeCell row={row} /></td>
                <td className="border-b border-r border-[#ececec] p-0 pl-[5px]">
                  {row.status === "ok" && <Tick />}
                  {row.status === "linked" && <Ico className="w-3 h-3">{linked}</Ico>}
                </td>
                <td className="border-b border-r border-[#ececec] p-0" />
                <td className="border-b border-[#ececec] p-0" />
              </tr>
            ))}
            {emptyRows.map((n) => (
              <tr key={n} className="h-4 even:bg-[#fafafa]">
                <td className="border-b border-r border-[#ececec] p-0" />
                <td className="border-b border-r border-[#ececec] p-0" />
                <td className="border-b border-r border-[#ececec] p-0" />
                <td className="border-b border-[#ececec] p-0" />
              </tr>
            ))}
          </tbody>
        </table>
      </div>
      <div className="ml-[4px] mr-[7px] mb-[4px] border-t-4 border-[#c6c6c6] text-[10px] text-[#1e6f8a]">
        {["Dependencies", "Details", "Preview"].map((s) => (
          <button key={s} className="flex h-[19px] w-full items-center justify-between border-b border-[#c4c4c4] pl-[6px] pr-[4px]">
            {s}
            <ChevronDown size={11} strokeWidth={4} />
          </button>
        ))}
      </div>
    </section>
  );
}

/* ---------- graphics window ---------- */

const partIcon = <><path d="M1 3l6-2 2 1v6l5 1 1 1v4l-6 2-7-3z" fill="#2a62d0" stroke="#163a90" strokeWidth=".8" /><path d="M1 3l3 1v7l5 1v3" stroke="#8fb4ff" strokeWidth="1.200" /></>;

function DocTab({ name, active }: { name: string; active?: boolean }) {
  return (
    <button className={`flex items-center gap-1 text-[9px] ${active ? "w-[97px] bg-[#56a0b8] pl-[5px] text-white" : "w-[104px] pl-0 text-[#222]"}`}>
      <Ico className="w-3 h-3">{partIcon}</Ico>
      {name}
      <Ico className="w-[9px] h-[9px]"><path d="M10 3h4v4M10 14H2V2h8M10 14c4-1 5-4 3-8" stroke="currentColor" strokeWidth="1.800" /></Ico>
      {active && <X size={9} strokeWidth={4} className="text-[#b8b0b8]" />}
    </button>
  );
}

const EDGE = "#3d4747";
const ORANGE = "#f2a14a";
const BLUE = "#3f55dc";

function ModelView() {
  return (
    <svg viewBox="368 151 912 519" preserveAspectRatio="xMidYMid slice" className="h-full w-full" role="img" aria-label="Model">
      <defs>
        <linearGradient id="topFace" x1="0" x2="1" y1="0" y2="1">
          <stop offset="0" stopColor="#b6d2d6" />
          <stop offset="1" stopColor="#c9e0e4" />
        </linearGradient>
        <linearGradient id="bore" x1="0" x2="1">
          <stop offset="0" stopColor="#67596a" />
          <stop offset=".35" stopColor="#745a6e" />
          <stop offset=".75" stopColor="#967890" />
          <stop offset="1" stopColor="#846a7d" />
        </linearGradient>
        <clipPath id="pocketFloor"><path d="M786.700 283.300L705 308.300 765 336 846 311z" /></clipPath>
      </defs>

      {/* plane parts behind the block */}
      <g fill="#d8a0c4" fillOpacity=".35">
        <path d="M611 184L727 237.500 611 273z" />
        <path d="M835 231L932 203V276z" />
        <path d="M619 557V594L666 579z" />
        <path d="M867 587L914 608V571z" />
      </g>
      <path d="M611 272V184L727 237.500M835 231.500L932 203V275M619 556V594L666 579M867 587L914 608V571" stroke={ORANGE} strokeWidth="2.500" fill="none" />

      {/* block */}
      <path d="M561 288L800 215 994 304 755 377z" fill="url(#topFace)" />
      <path d="M561 288L755 377V620L561 530.500z" fill="#687776" />
      <path d="M994 304L755 377V620L994 547z" fill="#7c8c8e" />

      {/* planes over the faces */}
      <g fill="#d5a5c8">
        <path d="M727 237.500L914 324V329L870 342 682 252z" fillOpacity=".32" />
        <path d="M835 231.500L893 258 659 333 619 315V297z" fillOpacity=".32" />
        <path d="M619 315L659 333V576L619 557z" fill="#c870a8" fillOpacity=".2" />
        <path d="M874 341L914 328.500V571L874 583.500z" fill="#c870a8" fillOpacity=".2" />
      </g>

      {/* pocket */}
      <path d="M668 291L787 254 787 283 705 308z" fill="#8b8692" />
      <path d="M727 272.500L787 254V283L727 301.500z" fill="#8d7084" />
      <path d="M787 254L884 299.500 846 311 787 283z" fill="#856b7d" />
      <path d="M787 254L884 299.500 872 303z" fill="#727379" />
      <path d="M786.700 283.300L705 308.300 765 336 846 311z" fill="#cbb0c4" />
      <path d="M705 308.300L716 304 728 312 716 313z" fill="#bcccd2" />
      <g clipPath="url(#pocketFloor)">
        <ellipse cx="776" cy="319" rx="57" ry="19" fill="url(#bore)" stroke={EDGE} strokeWidth=".8" />
        <path d="M753 331c10-2 20-2 30-1l-18 7z" fill="#cfadc6" />
      </g>
      <path d="M668 291L787 254.300 884 299.300 765 336zM787 254V283.300L705 308.300M787 283.300L846 311" stroke={EDGE} strokeWidth=".9" fill="none" />

      {/* block edges */}
      <path d="M561 288L800 215 994 304 755 377zM561 288V530.500M755 377V620M994 304V547" stroke={EDGE} strokeWidth="1.100" fill="none" />
      <path d="M561 530.500L755 620 994 547" stroke={BLUE} strokeWidth="1.800" fill="none" />

      {/* sketch curves */}
      <path d="M586 292L622.300 280.700 742.300 336.300 706.700 347.700zM727.300 354.700L788.300 335.700 815.700 348.300 754.300 367.700z" stroke={BLUE} strokeWidth="1.600" fill="none" />

      {/* plane borders in front */}
      <path d="M611 184L914 324V608M932 203L619 297V594" stroke={ORANGE} strokeWidth="2.500" fill="none" />

      {/* coordinate system */}
      <g stroke="#d3dada" strokeWidth=".9" fill="none">
        <path d="M777.500 487V539L820 526.500M777.500 539L811 554M777.500 507.700L803.500 500V531L824.600 540.300 798.700 548V517z" />
        <path d="M777.500 479l1.500 10h-3z" fill="#a8ada0" stroke="none" />
        <path d="M829 523l-9 .8 1 3z" fill="#fff" stroke="none" />
        <path d="M819 557l-6-5.500-2 2.500z" fill="#fff" stroke="none" />
      </g>
      <g fill="#d3dada" fontSize="10" fontFamily="Liberation Sans, sans-serif" textAnchor="middle">
        <text x="777.500" y="476">Z</text>
        <text x="833" y="526">Y</text>
        <text x="823" y="563">X</text>
      </g>
    </svg>
  );
}

function GraphicsWindow() {
  return (
    <section className="flex min-w-0 flex-1 flex-col">
      <div className="flex h-[18px] border-b-2 border-[#56a0b8] bg-white pl-[5px]">
        <DocTab name="assembly1.prt" />
        <div className="ml-[6px] flex"><DocTab name="model2.prt" /></div>
        <div className="-ml-[12px] flex"><DocTab name="model1.prt" active /></div>
      </div>
      <div className="min-h-0 flex-1 bg-gradient-to-b from-[#b0b4b5] via-[#d3d7d7] to-[#e8eced]">
        <ModelView />
      </div>
    </section>
  );
}

/* ---------- dialog ---------- */

function SectionHead({ title, open }: { title: string; open?: boolean }) {
  return (
    <button className="flex w-full items-center justify-between text-[11px] leading-[14px] text-[#1e6f8a]">
      {title}
      {open ? <ChevronUp size={12} strokeWidth={4} /> : <ChevronDown size={12} strokeWidth={4} />}
    </button>
  );
}

function DisplayDialog() {
  const [layer, setLayer] = useState("12");
  const [translucency, setTranslucency] = useState(70);
  const flatButton = "h-[22px] w-full border border-[#b4b4b4] bg-[#f0f0f0]";

  return (
    <div role="dialog" aria-label="Edit Object Display" className="absolute left-[277px] top-[44px] w-[242px] bg-[#f0f0f0] text-[9px] text-[#333] shadow-sm">
      <div className="flex h-[18px] items-center gap-[6px] bg-[#56a0b8] pl-[5px] pr-[6px] text-[11px] text-white">
        <Settings size={12} strokeWidth={2.500} />
        <span className="flex-1">Edit Object Display</span>
        <button aria-label="Close dialog"><X size={13} strokeWidth={2.500} /></button>
      </div>

      <div className="px-2 pb-2 pt-[7px]">
        <div role="tablist" className="flex items-end">
          <button role="tab" aria-selected="true" className="z-10 -mb-px h-[24px] w-[48px] border border-b-0 border-[#d0d0d0] bg-white">General</button>
          <button role="tab" aria-selected="false" className="h-[21px] w-[46px] border border-l-0 border-b-0 border-[#d8d8d8]">Analysis</button>
        </div>

        <div className="border border-[#cfcfcf] bg-white px-[3px] pb-[5px]">
          <div className="border-b border-[#c8c8c8] pl-[5px] pr-[3px] pb-[7px] pt-[3px]">
            <SectionHead title="Basic" open />
            <div className="pl-[2px] pr-1">
              <div className="mt-[7px] flex h-[19px] items-center justify-between">
                <label htmlFor="layer">Layer</label>
                <input id="layer" value={layer} onChange={(e) => setLayer(e.target.value)} className="h-[19px] w-[66px] border border-[#b4b4b4] pl-[5px] font-['DejaVu_Sans_Mono'] text-[10px] outline-none" />
              </div>
              <div className="mt-[3px] flex h-[18px] justify-between">
                <span className="leading-[14px]">Color</span>
                <button aria-label="Color" className="h-[17px] w-[60px] border border-[#777] bg-[#8f8f8f] p-px">
                  <span className="block h-full w-full border border-dashed border-[#ddd]" />
                </button>
              </div>
              <div className="mt-[3px] flex h-[20px] items-center justify-between">
                <label htmlFor="lineFont">Line Font</label>
                <div className="relative">
                  <select id="lineFont" className="h-[20px] w-[83px] appearance-none border border-[#b4b4b4] bg-white pl-1 outline-none">
                    <option>No Change</option>
                  </select>
                  <span className="pointer-events-none absolute right-[5px] top-[9px] flex"><Caret /></span>
                </div>
              </div>
              <div className="mt-[2px] flex h-[20px] items-center justify-between">
                <label htmlFor="lineWidth">Width</label>
                <div className="relative">
                  <select id="lineWidth" className="h-[20px] w-[103px] appearance-none border border-[#b4b4b4] bg-white pl-[37px] outline-none">
                    <option>0.70 mm</option>
                  </select>
                  <span className="pointer-events-none absolute left-1 top-2 h-[5px] w-[31px] bg-black" />
                  <span className="pointer-events-none absolute right-[5px] top-[9px] flex"><Caret /></span>
                </div>
              </div>
            </div>
          </div>

          <div className="border-b border-[#c8c8c8] pl-[5px] pr-[3px] pb-[6px] pt-[4px]">
            <SectionHead title="Shaded Display" open />
            <label htmlFor="translucency" className="mt-[9px] block pl-[2px] leading-[14px] text-[#aaa]">Translucency</label>
            <div className="pl-2 pr-[10px] text-[#aaa]">
              <output htmlFor="translucency" className="mt-[2px] block pl-[74px] text-center leading-[12px]">{translucency}</output>
              <input
                id="translucency"
                type="range"
                value={translucency}
                onChange={(e) => setTranslucency(Number(e.target.value))}
                className="mt-[2px] block h-[16px] w-full appearance-none bg-transparent [&::-webkit-slider-runnable-track]:h-[3px] [&::-webkit-slider-runnable-track]:bg-[#a6a6a6] [&::-webkit-slider-thumb]:-mt-[6px] [&::-webkit-slider-thumb]:h-[15px] [&::-webkit-slider-thumb]:w-[7px] [&::-webkit-slider-thumb]:appearance-none [&::-webkit-slider-thumb]:bg-[#a6a6a6]"
              />
              <div className="-mx-[6px] mt-[4px] flex justify-between pl-1 leading-[12px]"><span>0</span><span>100</span></div>
            </div>
            {["Partially Shaded", "Face Analysis"].map((t) => (
              <label key={t} className="mt-[4px] flex h-[14px] items-center gap-[3px] pl-[2px]">
                <input type="checkbox" className="h-[11px] w-[11px] appearance-none border border-[#444] bg-white checked:bg-[#56a0b8]" />
                {t}
              </label>
            ))}
          </div>

          {["Wireframe Display", "Facet Body", "Settings"].map((t) => (
            <div key={t} className="border-b border-[#c8c8c8] pl-[5px] pr-[3px] pb-px pt-[6px]"><SectionHead title={t} /></div>
          ))}
        </div>

        <div className="mt-[2px] flex flex-col gap-px">
          <button className={flatButton}>Inherit</button>
          <button className={flatButton}>Re-highlight Objects</button>
          <button className={flatButton}>Select New Objects</button>
        </div>
        <div className="mt-[9px] flex justify-end gap-1 pr-1">
          <button className="h-[19px] w-[53px] bg-[#6cb4c6] text-[10px] text-white">OK</button>
          <button className="h-[19px] w-[53px] border border-[#b4b4b4] bg-[#e1e1e1] text-[10px]">Apply</button>
          <button className="h-[19px] w-[53px] border border-[#b4b4b4] bg-[#e1e1e1] text-[10px]">Cancel</button>
        </div>
      </div>
    </div>
  );
}

/* ---------- taskbar ---------- */

const taskApps: { name: string; d: ReactNode; state?: "running" | "active" }[] = [
  { name: "Edge", d: <><circle cx="10" cy="10" r="9" fill="#1b7fd0" /><path d="M1 9C2 3 6 1 10 1c6 0 9 4 9 8 0 3-3 4-5 4-2 0-3-1-2-2 1-3-2-5-5-4-3 0-5 1-6 2z" fill="#4fd08c" /><path d="M1 9c2-5 10-5 10 1-3 1-3 8 5 7-6 5-15 0-15-8z" fill="#1560b4" /></> },
  { name: "Files", d: <><path d="M1 3h7l1 2h10v13H1z" fill="#e8b53a" /><path d="M1 7h18v11H1z" fill="#fbdc74" /><path d="M4 12h12v6h-3v-3H7v3H4z" fill="#3f90d8" /></> },
  { name: "Store", d: <><path d="M6 6V2h8v4" stroke="#4fb4ec" strokeWidth="1.600" /><path d="M1 5h18v11c0 2-1 3-3 3H4c-2 0-3-1-3-3z" fill="#f4f4f4" /><path d="M6 8h3.500v3.500H6z" fill="#e85a30" /><path d="M10.500 8H14v3.500h-3.500z" fill="#7cb83a" /><path d="M6 12.500h3.500V16H6z" fill="#2f9ae0" /><path d="M10.500 12.500H14V16h-3.500z" fill="#f4b82a" /></> },
  { name: "Mail", d: <><path d="M1 7l9-6 9 6v11H1z" fill="#1464b4" /><path d="M3 5h14v8H3z" fill="#fff" /><path d="M1 7l9 6 9-6v11H1z" fill="#2f9ae4" /><path d="M1 18l9-6 9 6z" fill="#4fb8f0" /></> },
  { name: "Chrome", d: <><circle cx="10" cy="10" r="9" fill="#e8442e" /><path d="M10 10L2.200 5.500A9 9 0 0 0 10 19z" fill="#2fa350" /><path d="M10 10v9a9 9 0 0 0 8-13H10z" fill="#fbc82e" /><circle cx="10" cy="10" r="4.500" fill="#fff" /><circle cx="10" cy="10" r="3.500" fill="#3a7af0" /></> },
  { name: "Calculator", d: <><path d="M3 1h14v18H3z" fill="#7a8a98" /><path d="M5 3h10v3H5z" fill="#4fc0f0" /><path d="M5 8h2.500v2.500H5zM9 8h2.500v2.500H9zM5 12h2.500v2.500H5zM9 12h2.500v2.500H9zM5 16h2.500v2H5zM9 16h2.500v2H9zM13 8h2.500v2.500H13z" fill="#e8eef2" /><path d="M13 12h2.500v6H13z" fill="#3a9ad8" /></> },
  { name: "Opera", state: "running", d: <path fillRule="evenodd" d="M10 1a9 9 0 1 0 0 18 9 9 0 0 0 0-18zm0 2.500c2.500 0 4 3 4 6.500s-1.500 6.500-4 6.500S6 13.500 6 10s1.500-6.500 4-6.500z" fill="#e0202c" /> },
  { name: "NX", state: "active", d: <><path d="M4 8l5 1 7 9c-6 1-11-3-12-10z" fill="#4fb8e0" /><path d="M9 9l5-3 2 6-3 4z" fill="#2f7fc0" /><path d="M2 1l5 1 5 8-5-2z" fill="#d02a3a" /><path d="M9 4l3-3 1 6-2 2z" fill="#a81e34" /><path d="M17 4c4 4-2 11-9 14" stroke="#f2cc4a" strokeWidth="2" /></> },
  { name: "Recorder", state: "running", d: <><path d="M1 1h18v18H1z" fill="#0d0d0d" /><path d="M1 5V1h4M15 1h4v4M19 15v4h-4M5 19H1v-4" stroke="#d03a4a" strokeWidth="1.300" /><path d="M4 6h9v8H4z" fill="#e03a50" stroke="#fff" /><path d="M13 9l3-2v6l-3-2z" fill="#fff" /><circle cx="8" cy="10" r="2" stroke="#fff" /></> },
  { name: "Monitor", state: "running", d: <><path d="M3 2l14-1v11l-14 2z" fill="#c8d4dc" stroke="#8a98a4" /><path d="M4 10l3-4 2 5 3-7 2 4 2-2" stroke="#fff" strokeWidth="1.300" /><path d="M2 15h9l3 3H5zM12 14l5 3" fill="#aab4bc" stroke="#e4e8ec" strokeWidth=".8" /></> },
];

function Taskbar() {
  return (
    <footer className="flex h-[32px] items-stretch bg-gradient-to-r from-[#223a42] via-[#203840] via-60% to-[#182444] text-white">
      <button aria-label="Start" className="flex w-[39px] items-center justify-center">
        <Ico box={14} className="w-[14px] h-[14px]"><path d="M0 2l6-1v5.500H0zM7 1l7-1v6.500H7zM0 7.500h6V13l-6-1zM7 7.500h7V14l-7-1z" fill="#fff" /></Ico>
      </button>
      <label className="flex w-[229px] items-center bg-[#f2f2f2] pl-[9px] text-[#333]">
        <Search size={15} strokeWidth={1.500} className="-scale-x-100" />
        <input placeholder="Type here to search" aria-label="Type here to search" className="ml-2 min-w-0 flex-1 text-[11px] outline-none placeholder:text-[#444]" />
        <svg viewBox="0 0 54 28" className="mr-[3px] h-[28px] w-[54px]" aria-hidden="true">
          <path d="M15 2c3-2 7 0 6 4L9 24c-2 4-9 3-8-1z" fill="#ee5a9a" />
          <path d="M13 8l6 3-3 5-6-3z" fill="#f8d048" />
          <path d="M8 15l6 3-3 5-6-3z" fill="#3aa858" />
          <path d="M29 8l-4 8-5 5-4 5 3 2 6-4 5-6 4-9z" fill="#4a5468" />
          <path d="M30 4l8-3 8 3 3 7-2 13H31l-2-12z" fill="#c8402c" />
          <path d="M35 2h6l-1 22h-4z" fill="#e05a3a" />
          <path d="M34 1l4 3 4-3M31 22h16" stroke="#4a3a44" strokeWidth="2" fill="none" />
          <path d="M47 4l5 12 1 7-4 1-2-8z" fill="#7a8090" />
        </svg>
      </label>
      <button aria-label="Task view" className="flex w-[41px] items-center justify-center">
        <Ico className="w-[14px] h-[14px]"><path d="M1 1v3h9V1M1 15v-3h9v3M1 6h9v4H1zM14 1v9M14 12v3M12.500 5h3" stroke="#e4e8ea" strokeWidth="1.300" /></Ico>
      </button>
      {taskApps.map((a) => (
        <button
          key={a.name}
          aria-label={a.name}
          className={`flex w-[39px] items-center justify-center ${a.state === "active" ? "bg-[#4b5f6c]" : ""} ${a.state ? "border-b-2 border-[#6aa6d8] pt-[2px]" : ""}`}
        >
          <Ico box={20} className="w-[19px] h-[19px]">{a.d}</Ico>
        </button>
      ))}

      <div className="ml-auto flex items-center text-[#f0f2f4]">
        <Ico box={20} className="w-[20px] h-[16px] mr-[19px]"><path d="M1 2h15v16H1zM16 5h3v13h-4" stroke="currentColor" strokeWidth="1.800" /><path d="M4 6h9M10 10h4M10 14h4" stroke="currentColor" strokeWidth="1.800" /><path d="M4 9h4v6H4z" stroke="currentColor" strokeWidth="1.500" /></Ico>
        <div className="flex items-center gap-[7px]">
          <ChevronUp size={12} strokeWidth={2} />
          <Ico className="w-3 h-3"><path d="M3 5h7v7H3zM10 8l3-2v5l-3-2M3 3c2-3 7-3 9 0M3 14c2 2 7 2 9 0" stroke="currentColor" strokeWidth="1.200" /></Ico>
          <Ico className="w-3 h-3.5"><path d="M5 1h6v9c0 2-6 2-6 0z" fill="currentColor" /><path d="M3 9c0 5 10 5 10 0M8 13v3M5 15.500h6" stroke="currentColor" strokeWidth="1.200" /></Ico>
          <Ico className="w-[13px] h-[13px]"><path d="M5 3h10v8H5M8 14h6M11 11v3M1 2h4v5H1zM3 7v6h5" stroke="currentColor" strokeWidth="1.300" /></Ico>
          <Ico className="w-[13px] h-[13px]"><path d="M1 6h2l4-3v10l-4-3H1zM9 6c1 1 1 3 0 4M11 4c2 2 2 6 0 8M13 2c3 3 3 9 0 12" stroke="currentColor" strokeWidth="1.200" /></Ico>
        </div>
        <span className="ml-[7px] text-[10px]">ENG</span>
        <time className="ml-[8px] text-center text-[9px] leading-[15px]">15:39<br />21-10-2023</time>
        <Ico className="ml-[13px] w-[15px] h-[15px]"><path d="M1.500 2h13v10h-4v3l-3-3h-6z" stroke="currentColor" strokeWidth="1.200" /></Ico>
        <span className="ml-[15px] mr-1 h-[32px] w-px bg-[#56647c]" />
      </div>
    </footer>
  );
}

export default function App() {
  return (
    <div className="flex min-h-screen flex-col bg-white font-['Open_Sans',sans-serif] leading-normal">
      <TitleBar />
      <RibbonTabs />
      <Ribbon />
      <SelectionBar />

      <main className="relative flex min-h-[500px] flex-1">
        <ResourceBar />
        <PartNavigator />
        <GraphicsWindow />
        <DisplayDialog />

        {/* mouse pointer */}
        <svg viewBox="0 0 12 18" className="pointer-events-none absolute left-[463px] top-[155px] h-[17px] w-[11px]" aria-hidden="true">
          <path d="M1 1v13l3-3 2.500 5.500 2-1L6 10.500h4.500z" fill="#fff" stroke="#333" />
        </svg>
        <p className="pointer-events-none absolute inset-x-0 top-[214px] text-center text-[18px] text-white/60 [text-shadow:1px_1px_2px_rgba(0,0,0,0.4)]">
          Recorded with iTop Screen Recorder
        </p>
      </main>

      <div className="flex h-[18px] items-center justify-between border-t border-[#b4b4b4] bg-white pl-[2px] pr-[44px] text-[9px] font-semibold text-[#111]">
        Choose settings to edit
        <span className="flex gap-1">
          <Ico className="w-3 h-3"><path d="M0 0h16v16H0z" fill="#d0d0d0" /><path d="M3 4l3 8 2-6 2 6 3-9" stroke="#888" /></Ico>
          <Ico className="w-3 h-3"><path d="M4 .7H.7V4M12 .7h3.300V4M4 15.300H.7V12M12 15.300h3.300V12" stroke="#555" /><path d="M3.500 3.500h9v9h-9z" fill="#fff" stroke="#234a86" strokeWidth="1.400" /><path d="M5 6h6v4H5z" fill="#4a80c8" /></Ico>
        </span>
      </div>
      <Taskbar />
    </div>
  );
}
